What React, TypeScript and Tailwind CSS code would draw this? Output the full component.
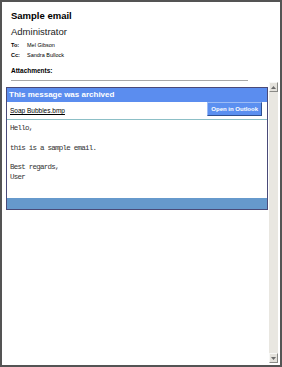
import React from "react"

const ScrollButton = ({ up }: { up?: boolean }) => (
  <div className="h-[10px] w-[9px] bg-[#e4e2dc] border border-t-[#f8f8f6] border-l-[#f8f8f6] border-b-[#8a8a86] border-r-[#8a8a86] flex items-center justify-center">
    <svg width="5" height="3" viewBox="0 0 5 3">
      {up ? <path d="M2.5 0 L5 3 L0 3 Z" fill="#6a6a6a" /> : <path d="M0 0 L5 0 L2.5 3 Z" fill="#6a6a6a" />}
    </svg>
  </div>
)

export default function App() {
  return (
    <div className="w-[282px] h-[367px] border-2 border-[#545454] bg-white flex flex-col font-['Liberation_Sans',Arial,sans-serif] text-black overflow-hidden">
      <div className="pl-[9px] pt-[8px] pr-[32px]">
        <div className="text-[9.5px] font-bold leading-[12px]">Sample email</div>
        <div className="text-[9.5px] leading-[12px] mt-[4px] text-[#222]">Administrator</div>
        <div className="mt-[2px] text-[5.5px] leading-[10px]">
          <div className="flex">
            <span className="w-[16px] font-bold">To:</span>
            <span>Mel Gibson</span>
          </div>
          <div className="flex">
            <span className="w-[16px] font-bold">Cc:</span>
            <span>Sandra Bullock</span>
          </div>
        </div>
        <div className="mt-[6px] text-[6.5px] font-bold leading-[10px]">Attachments:</div>
        <div className="mt-[4px] h-[1px] bg-[#a8a8a8]" />
      </div>

      <div className="flex flex-1 pl-[4px] pr-[2px] pb-[2px]">
        <div className="flex-1 pt-[6px]">
          <div className="border border-[#4a4a78] flex flex-col">
            <div className="h-[14px] bg-[#5b8def] text-white text-[8px] font-bold leading-[14px] pl-[2px]">
              This message was archived
            </div>
            <div className="h-[17px] flex items-start justify-between pl-[3px] pr-[5px]">
              <span className="text-[6.5px] underline leading-[17px]">Soap Bubbles.bmp</span>
              <button className="h-[14px] px-[3px] bg-[#5b8ff0] text-white text-[6px] font-bold leading-[12px] border border-t-[#9cbcf6] border-l-[#9cbcf6] border-b-[#2f4f8f] border-r-[#2f4f8f]">
                Open in Outlook
              </button>
            </div>
            <div className="h-[1px] bg-[#8cbfc6]" />
            <div className="h-[78px] pl-[3px] pt-[4px] font-['Liberation_Mono','Courier_New',monospace] text-[7.5px] tracking-[-0.75px] leading-[9.8px] text-[#333] whitespace-pre">
              {"Hello,\n\nthis is a sample email.\n\nBest regards,\nUser"}
            </div>
            <div className="h-[11px] bg-[#6699cc]" />
          </div>
        </div>
        <div className="ml-[1px] w-[9px] mt-[1px] flex flex-col bg-[#e9e7e1]">
          <ScrollButton up />
          <div className="flex-1" />
          <ScrollButton />
        </div>
      </div>
    </div>
  )
}
